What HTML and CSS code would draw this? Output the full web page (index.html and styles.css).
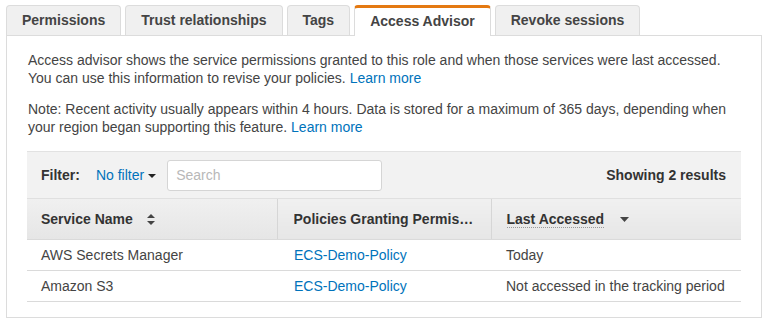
FILE: index.html
```html
<!DOCTYPE html>
<html lang="en">
<head>
  <meta charset="UTF-8" />
  <title>Access Advisor</title>
  <link rel="stylesheet" href="styles.css">
</head>
<body>
  <div class="tabs">
    <a href="#" class="tab">Permissions</a>
    <a href="#" class="tab">Trust relationships</a>
    <a href="#" class="tab">Tags</a>
    <a href="#" class="tab active">Access Advisor</a>
    <a href="#" class="tab">Revoke sessions</a>
  </div>

  <div class="panel">
    <p class="intro">
      Access advisor shows the service permissions granted to this role and when those services were last accessed.
      You can use this information to revise your policies. <a href="#">Learn more</a>
    </p>
    <p class="note">
      Note: Recent activity usually appears within 4 hours. Data is stored for a maximum of 365 days, depending when
      your region began supporting this feature. <a href="#">Learn more</a>
    </p>

    <div class="grid">
      <div class="filter-bar">
        <span class="filter-label">Filter:</span>
        <a href="#" class="filter-select">No filter <span class="caret"></span></a>
        <input type="text" class="search" placeholder="Search">
        <span class="results">Showing 2 results</span>
      </div>

      <table>
        <thead>
          <tr>
            <th class="col-service">
              Service Name
              <svg class="sort-icon" width="8" height="11" viewBox="0 0 8 11"><path d="M4 0 L8 4 L0 4 Z M4 11 L8 7 L0 7 Z" fill="#444"/></svg>
            </th>
            <th class="col-policy"><span class="clip">Policies Granting Permissions</span></th>
            <th class="col-last">
              <span class="dotted">Last Accessed</span>
              <svg class="sort-icon down" width="9" height="5" viewBox="0 0 9 5"><path d="M0 0 L9 0 L4.5 5 Z" fill="#444"/></svg>
            </th>
          </tr>
        </thead>
        <tbody id="rows"></tbody>
      </table>
    </div>
  </div>

  <script>
    const services = [
      { name: 'AWS Secrets Manager', policy: 'ECS-Demo-Policy', last: 'Today' },
      { name: 'Amazon S3', policy: 'ECS-Demo-Policy', last: 'Not accessed in the tracking period' },
    ];

    const tbody = document.getElementById('rows');
    services.forEach((s) => {
      tbody.insertAdjacentHTML('beforeend', `
        <tr>
          <td>${s.name}</td>
          <td><a href="#">${s.policy}</a></td>
          <td>${s.last}</td>
        </tr>
      `);
    });
  </script>
</body>
</html>
```

FILE: styles.css
```css
:root {
  --link: #0073bb;
  --text: #444;
  --border: #dcdcdc;
  --orange: #e47911;
}

* {
  box-sizing: border-box;
  margin: 0;
  padding: 0;
}

body {
  background: #fff;
  color: var(--text);
  font-family: 'Liberation Sans', Arial, sans-serif;
  font-size: 14px;
}

a {
  color: var(--link);
  text-decoration: none;
}

.tabs {
  display: flex;
  gap: 4px;
  padding: 5px 0 0 6px;
  height: 35px;
}
.tab {
  display: block;
  height: 30px;
  padding: 0 15px;
  line-height: 29px;
  font-size: 14px;
  font-weight: bold;
  color: var(--text);
  background: #f0f0f0;
  border: 1px solid var(--border);
  border-bottom: none;
  border-radius: 4px 4px 0 0;
}
.tab.active {
  background: #fff;
  border-top: 3px solid var(--orange);
  line-height: 27px;
  height: 31px;
  margin-bottom: -1px;
  position: relative;
  z-index: 1;
}

.panel {
  width: 756px;
  margin-left: 6px;
  border: 1px solid var(--border);
  padding: 15px 20px 15px;
}

.panel p {
  line-height: 18px;
  padding-left: 1px;
}
.panel p.note {
  margin-top: 13px;
}

.grid {
  margin-top: 15px;
}

.filter-bar {
  display: flex;
  align-items: center;
  height: 48px;
  padding: 0 15px 0 14px;
  background: #f2f2f2;
  border-top: 1px solid #e2e2e2;
  border-bottom: 1px solid #e0e0e0;
}
.filter-label {
  font-weight: bold;
  color: #333;
}
.filter-select {
  margin-left: 16px;
  display: flex;
  align-items: center;
}
.caret {
  display: inline-block;
  margin-left: 4px;
  margin-top: 2px;
  border-left: 4px solid transparent;
  border-right: 4px solid transparent;
  border-top: 4px solid #222;
}
.search {
  margin-left: 11px;
  width: 215px;
  height: 31px;
  padding: 0 8px;
  border: 1px solid #d5d5d5;
  border-radius: 3px;
  font-family: inherit;
  font-size: 14px;
  color: #333;
}
.search::placeholder {
  color: #b8b8b8;
}
.results {
  margin-left: auto;
  font-weight: bold;
  color: #333;
}

table {
  width: 100%;
  border-collapse: collapse;
  table-layout: fixed;
}
th {
  height: 40px;
  padding: 0 14px;
  text-align: left;
  font-weight: bold;
  color: #333;
  background: linear-gradient(#f0f0f0, #e6e6e6);
  border-left: 1px solid #d6d6d6;
  border-bottom: 1px solid #dadada;
  white-space: nowrap;
}
th:first-child {
  border-left: none;
}
th.col-service { width: 250px; }
th.col-policy { width: 214px; padding-left: 16px; }
th.col-last { padding-left: 15px; }

th .clip {
  display: block;
  overflow: hidden;
  text-overflow: ellipsis;
}
.dotted {
  border-bottom: 1px dotted #999;
}
.sort-icon {
  margin-left: 10px;
  vertical-align: -1px;
}
.sort-icon.down {
  margin-left: 12px;
  vertical-align: 2px;
}

td {
  height: 31px;
  padding: 0 14px;
  border-bottom: 1px solid #dadada;
  color: var(--text);
}
td:nth-child(2) { padding-left: 17px; }
td:nth-child(3) { padding-left: 15px; }
```
